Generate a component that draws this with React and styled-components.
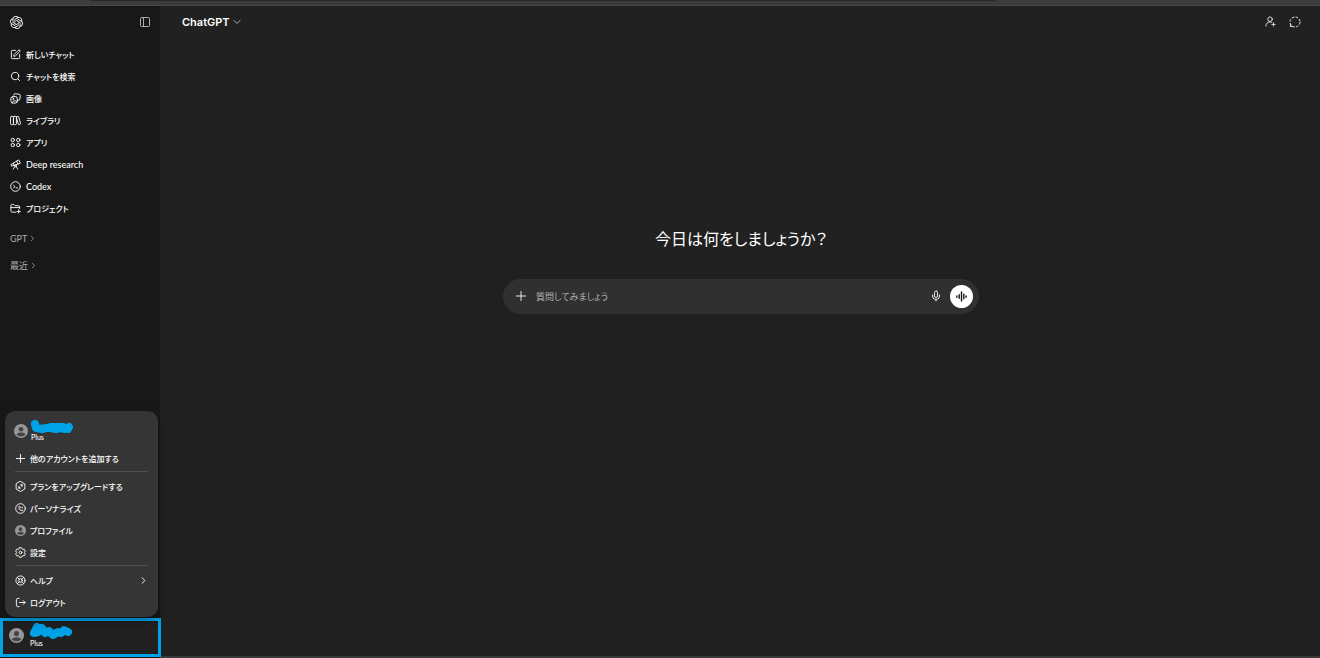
import React from "react";
import styled, { createGlobalStyle } from "styled-components";
import { SiOpenai } from "react-icons/si";
import {
  ChevronDown,
  ChevronRight,
  LifeBuoy,
  Mic,
  PanelLeft,
  Search,
  SquarePen,
} from "lucide-react";

const GlobalStyle = createGlobalStyle`
  * {
    box-sizing: border-box;
  }
  body {
    margin: 0;
    background: #212121;
    color: #ffffff;
    font-family: Lato, "Noto Sans CJK JP", sans-serif;
    font-size: 8px;
    font-weight: 500;
    font-feature-settings: "palt";
  }
  button, input {
    font: inherit;
    font-feature-settings: inherit;
    color: inherit;
    border: none;
    background: none;
    padding: 0;
  }
  button {
    cursor: pointer;
  }
  svg {
    display: block;
    flex: none;
  }
`;

const Page = styled.div`
  min-height: 100vh;
  display: flex;
  flex-direction: column;
`;
const BrowserEdge = styled.div`
  height: 6px;
  padding: 0 324px 0 90px;
  background: #3c3c3c;
  border-bottom: 1px solid #464646;
`;
const AddressBar = styled.div`
  height: 1px;
  background: #282828;
`;
const Body = styled.div`
  flex: 1;
  display: flex;
`;

const Sidebar = styled.aside`
  position: relative;
  width: 160px;
  padding-bottom: 1px;
  display: flex;
  flex-direction: column;
  background: #181818;
`;
const SidebarTop = styled.div`
  height: 32px;
  padding: 0 9px 0 10px;
  display: flex;
  align-items: center;
  justify-content: space-between;
`;
const IconButton = styled.button`
  display: flex;
  color: ${(props) => props.$color || "#e8e8e8"};
`;
const Nav = styled.nav`
  padding-top: 5px;
`;
const NavItem = styled.a`
  height: 22px;
  padding-left: 10px;
  display: flex;
  align-items: center;
  gap: 5px;
  font-size: ${(props) => (props.$latin ? 9 : 8)}px;
  color: inherit;
  text-decoration: none;
  white-space: nowrap;
`;
const Sections = styled.div`
  padding-top: 6px;
`;
const SectionButton = styled.button`
  height: 27px;
  padding-left: 10px;
  display: flex;
  align-items: center;
  gap: 1px;
  font-size: 9px;
  font-weight: 400;
  color: #afafaf;
`;

const Account = styled.div`
  width: 161px;
  height: 39px;
  margin-top: auto;
  border: 3px solid #00a2e8;
  background: #181818;
`;
const AccountButton = styled.button`
  width: 100%;
  height: 100%;
  padding: 0 0 5px 6px;
  border-radius: 6px;
  background: #212121;
  display: flex;
  align-items: center;
  gap: 6px;
  text-align: left;
`;
const Avatar = styled.span`
  width: ${(props) => props.$size}px;
  height: ${(props) => props.$size}px;
  border-radius: 50%;
  overflow: hidden;
  background: #989898;
`;
const UserInfo = styled.span`
  display: flex;
  flex-direction: column;
  font-size: 7px;
  line-height: 9px;
`;

const Menu = styled.div`
  position: absolute;
  left: 5px;
  right: 2px;
  bottom: 41px;
  padding: 6px 9px 4px;
  border-radius: 10px;
  background: #353535;
  box-shadow: 0 4px 12px rgba(0, 0, 0, 0.3);
`;
const MenuUser = styled.button`
  height: 28px;
  margin-bottom: 2px;
  display: flex;
  align-items: center;
  gap: 3px;
  text-align: left;
`;
const MenuItem = styled.button`
  width: 100%;
  height: 22px;
  padding-left: 1px;
  display: flex;
  align-items: center;
  gap: 4px;
  white-space: nowrap;
`;
const MenuLabel = styled.span`
  flex: 1;
  text-align: left;
`;
const Divider = styled.hr`
  height: 1px;
  margin: 2px 1px 3px;
  border: none;
  background: #505050;
`;

const Main = styled.main`
  flex: 1;
  display: flex;
  flex-direction: column;
  border-bottom: 2px solid #3a3a3a;
`;
const Header = styled.header`
  height: 32px;
  padding: 0 19px 0 22px;
  display: flex;
  align-items: center;
  justify-content: space-between;
`;
const ModelButton = styled.button`
  display: flex;
  align-items: center;
  gap: 1px;
  font-family: Inter, sans-serif;
  font-size: 11px;
  font-weight: 600;
  color: #ffffff;
`;
const HeaderActions = styled.div`
  display: flex;
  gap: 13px;
`;
const Welcome = styled.section`
  flex: 1;
  padding: 0 16px 154px 18px;
  display: flex;
  flex-direction: column;
  align-items: center;
  justify-content: center;
`;
const Title = styled.h1`
  margin: 0 0 28px;
  font-size: 16px;
  line-height: 24px;
  font-weight: 400;
  color: #ffffff;
`;
const Composer = styled.form`
  width: 100%;
  max-width: 476px;
  height: 35px;
  padding: 0 6px 0 12px;
  display: flex;
  align-items: center;
  border-radius: 18px;
  background: #303030;
  box-shadow: 0 4px 24px rgba(0, 0, 0, 0.08);
`;
const Prompt = styled.input`
  flex: 1;
  min-width: 0;
  margin: 0 9px;
  font-size: 9px;
  font-weight: 400;
  outline: none;
  &::placeholder {
    color: #afafaf;
    opacity: 1;
  }
`;
const VoiceButton = styled.button`
  width: 23px;
  height: 23px;
  margin-left: 8px;
  border-radius: 50%;
  background: #ffffff;
  color: #111111;
  display: flex;
  align-items: center;
  justify-content: center;
`;

const Glyph = ({ size = 11, children }) => (
  <svg
    width={size}
    height={size}
    viewBox="0 0 24 24"
    fill="none"
    stroke="currentColor"
    strokeWidth="2"
    strokeLinecap="round"
    strokeLinejoin="round"
    aria-hidden="true"
  >
    {children}
  </svg>
);

const PlusIcon = ({ size }) => (
  <Glyph size={size}>
    <path d="M12 3v18M3 12h18" />
  </Glyph>
);
const ImagesIcon = () => (
  <Glyph>
    <path d="M8 5a3 3 0 0 1 3.500-3.500l8 1.200A3 3 0 0 1 22.500 6l-1 7.500a3 3 0 0 1-3.500 2.500" />
    <rect x="2" y="8" width="14" height="14" rx="4" transform="rotate(-6 9 15)" />
    <circle cx="7" cy="13" r="1" />
    <path d="M4 21c2-4 6-5 12-3" />
  </Glyph>
);
const LibraryIcon = () => (
  <Glyph>
    <rect x="1" y="3" width="6.500" height="18" rx="2" />
    <rect x="7.500" y="3" width="6.500" height="18" rx="2" />
    <path d="M15 4l2-.8a1.500 1.500 0 0 1 2 1l4 14a1.500 1.500 0 0 1-1 2l-2 .6a1.500 1.500 0 0 1-2-1L14 6a1.500 1.500 0 0 1 1-2z" />
  </Glyph>
);
const AppsIcon = () => (
  <Glyph>
    <circle cx="6" cy="6.500" r="3.700" />
    <circle cx="18" cy="6.500" r="3.700" />
    <circle cx="6" cy="17.500" r="3.700" />
    <circle cx="18" cy="17.500" r="3.700" />
  </Glyph>
);
const ResearchIcon = () => (
  <Glyph>
    <path d="M15 4l4-2 3.500 7-4 2z" />
    <path d="M15 4.500L7 9l2.500 5 8.500-3.500" />
    <path d="M7 9.500l-5 2.500 1.500 3.500 5.500-2" />
    <circle cx="12" cy="15" r="2" />
    <path d="M10.500 16.500L7 22M13.500 16.500L17 22" />
  </Glyph>
);
const CodexIcon = () => (
  <Glyph>
    <circle cx="12" cy="12" r="10.500" />
    <path d="M8 9l2 3-2 3M13 15h3.500" />
  </Glyph>
);
const ProjectIcon = () => (
  <Glyph>
    <path d="M13 20H5a3 3 0 0 1-3-3V6a3 3 0 0 1 3-3h3l3 3h7a3 3 0 0 1 3 3v3" />
    <path d="M2 10h19M19 15v7M15.500 18.500h7" />
  </Glyph>
);
const UpgradeIcon = () => (
  <Glyph>
    <path d="M12 1l9.500 5.500v11L12 23l-9.500-5.500v-11z" />
    <path d="M8 16l2-2M16 8l-2.500 2.500M12 8.500h3.500V12M8.500 12v3.500H12" />
  </Glyph>
);
const PersonalizeIcon = () => (
  <Glyph>
    <circle cx="12" cy="12" r="10.500" />
    <path d="M9 7a6.500 6.500 0 0 0 8 9" />
    <path d="M12.500 9v1.500M16 9v1.500" />
  </Glyph>
);
const LogoutIcon = () => (
  <Glyph>
    <path d="M9 3H6a3 3 0 0 0-3 3v12a3 3 0 0 0 3 3h3" />
    <path d="M10 12h12M18 8l4 4-4 4" />
  </Glyph>
);
const SettingsIcon = () => (
  <Glyph>
    <path d="M10 1.500h4l1.500 2.800 1.500.8 3.500-.1 2 3.500-1.900 3.500 1.900 3.500-2 3.500-3.500-.1-1.500.8-1.500 2.800h-4l-1.500-2.800-1.500-.8-3.500.1-2-3.500L3.400 12 1.500 8.500l2-3.500 3.500.1 1.500-.8z" />
    <circle cx="12" cy="12" r="3" />
  </Glyph>
);
const InviteIcon = () => (
  <Glyph>
    <circle cx="11" cy="7" r="5" />
    <path d="M2 22c0-5 3-9 9-9 2 0 3 .3 4 1M18.500 15v7M15 18.500h7" />
  </Glyph>
);
const TemporaryIcon = () => (
  <Glyph size={12}>
    <circle cx="12" cy="12" r="10" strokeDasharray="5 2.850" strokeLinecap="butt" />
    <path d="M3 17v4h4" />
  </Glyph>
);
const VoiceIcon = () => (
  <Glyph>
    <path d="M2 10.500v3M7 8v8M12 2v20M17 7v10M22 10.500v3" strokeWidth="3" />
  </Glyph>
);

const Person = ({ size }) => (
  <Avatar $size={size}>
    <svg width={size} height={size} viewBox="0 0 16 16" fill="#454545" aria-hidden="true">
      <circle cx="8" cy="6" r="2.700" />
      <path d="M3 12c1-3 9-3 10 0-2 3-8 3-10 0z" />
    </svg>
  </Avatar>
);

// marker stroke that hides the account name
const Scribble = ({ d, height }) => (
  <svg
    width="42"
    height={height}
    viewBox={`0 0 42 ${height}`}
    fill="none"
    stroke="#00a2e8"
    strokeWidth="8"
    strokeLinecap="round"
    strokeLinejoin="round"
    aria-hidden="true"
  >
    <path d={d} />
  </svg>
);

const navItems = [
  { label: "新しいチャット", icon: <SquarePen size={11} /> },
  { label: "チャットを検索", icon: <Search size={11} /> },
  { label: "画像", icon: <ImagesIcon /> },
  { label: "ライブラリ", icon: <LibraryIcon /> },
  { label: "アプリ", icon: <AppsIcon /> },
  { label: "Deep research", icon: <ResearchIcon />, latin: true },
  { label: "Codex", icon: <CodexIcon />, latin: true },
  { label: "プロジェクト", icon: <ProjectIcon /> },
];

const AccountMenu = () => (
  <Menu>
    <MenuUser>
      <Person size={14} />
      <UserInfo>
        <Scribble height={13} d="M4 4l1 4 6 1 4-1 5 0 5 1 5-1 4 1 4-2-1 2-5-2-12 0" />
        Plus
      </UserInfo>
    </MenuUser>
    <MenuItem>
      <PlusIcon />
      <MenuLabel>他のアカウントを追加する</MenuLabel>
    </MenuItem>
    <Divider />
    <MenuItem>
      <UpgradeIcon />
      <MenuLabel>プランをアップグレードする</MenuLabel>
    </MenuItem>
    <MenuItem>
      <PersonalizeIcon />
      <MenuLabel>パーソナライズ</MenuLabel>
    </MenuItem>
    <MenuItem>
      <Person size={11} />
      <MenuLabel>プロファイル</MenuLabel>
    </MenuItem>
    <MenuItem>
      <SettingsIcon />
      <MenuLabel>設定</MenuLabel>
    </MenuItem>
    <Divider />
    <MenuItem>
      <LifeBuoy size={11} />
      <MenuLabel>ヘルプ</MenuLabel>
      <ChevronRight size={11} />
    </MenuItem>
    <MenuItem>
      <LogoutIcon />
      <MenuLabel>ログアウト</MenuLabel>
    </MenuItem>
  </Menu>
);

const App = () => {
  return (
    <Page>
      <GlobalStyle />
      <BrowserEdge>
        <AddressBar />
      </BrowserEdge>
      <Body>
        <Sidebar>
          <SidebarTop>
            <SiOpenai size={13} />
            <IconButton $color="#afafaf" aria-label="サイドバーを閉じる">
              <PanelLeft size={12} />
            </IconButton>
          </SidebarTop>
          <Nav>
            {navItems.map((item) => (
              <NavItem href="#" key={item.label} $latin={item.latin}>
                {item.icon}
                {item.label}
              </NavItem>
            ))}
          </Nav>
          <Sections>
            <SectionButton>
              GPT
              <ChevronRight size={9} />
            </SectionButton>
            <SectionButton>
              最近
              <ChevronRight size={9} />
            </SectionButton>
          </Sections>
          <AccountMenu />
          <Account>
            <AccountButton>
              <Person size={15} />
              <UserInfo>
                <Scribble height={16} d="M7 4L4 10l4-1 4-4 3 5 4-2 4 4 5-3 3 1 3-3 4 2" />
                Plus
              </UserInfo>
            </AccountButton>
          </Account>
        </Sidebar>
        <Main>
          <Header>
            <ModelButton>
              ChatGPT
              <ChevronDown size={12} color="#afafaf" />
            </ModelButton>
            <HeaderActions>
              <IconButton aria-label="ユーザーを追加">
                <InviteIcon />
              </IconButton>
              <IconButton aria-label="一時チャット">
                <TemporaryIcon />
              </IconButton>
            </HeaderActions>
          </Header>
          <Welcome>
            <Title>今日は何をしましょうか？</Title>
            <Composer>
              <IconButton type="button" aria-label="追加">
                <PlusIcon size={12} />
              </IconButton>
              <Prompt placeholder="質問してみましょう" aria-label="質問してみましょう" />
              <IconButton type="button" aria-label="音声入力">
                <Mic size={12} />
              </IconButton>
              <VoiceButton type="button" aria-label="音声モード">
                <VoiceIcon />
              </VoiceButton>
            </Composer>
          </Welcome>
        </Main>
      </Body>
    </Page>
  );
};

export default App;
